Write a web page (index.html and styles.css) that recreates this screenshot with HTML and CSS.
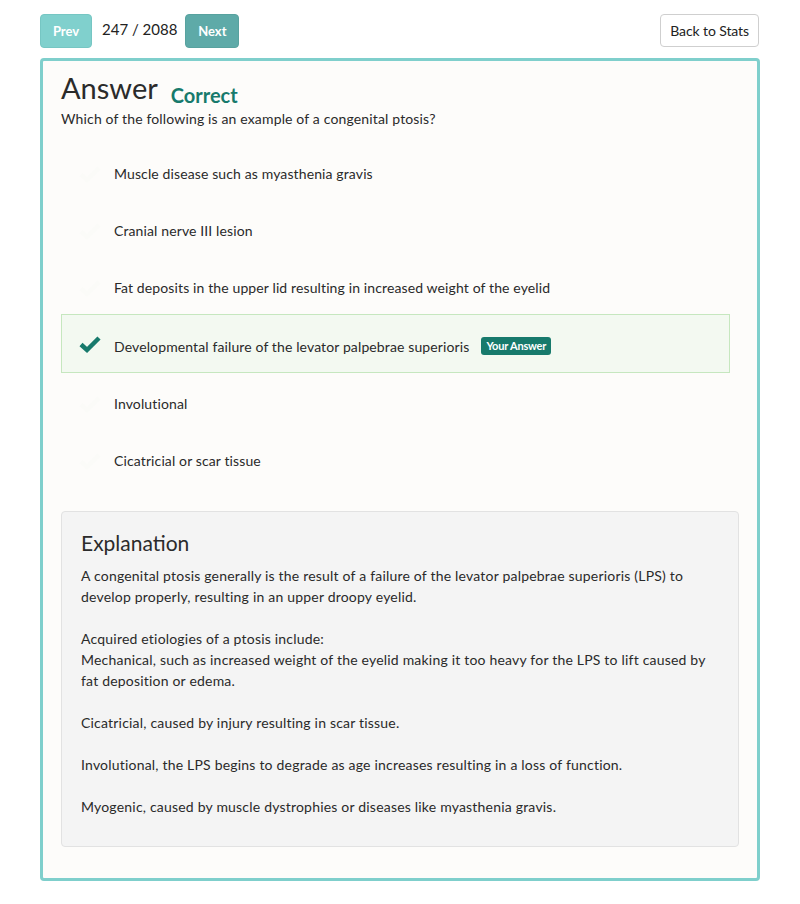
FILE: index.html
```html
<!DOCTYPE html>
<html>
<head>
<meta charset="utf-8">
<link rel="stylesheet" href="styles.css">
</head>
<body>
<div class="page">
  <div class="toolbar">
    <div class="nav">
      <button class="btn btn-prev">Prev</button>
      <span class="counter">247 / 2088</span>
      <button class="btn btn-next">Next</button>
    </div>
    <button class="btn btn-back">Back to Stats</button>
  </div>
  <div class="card">
    <div class="title-row">
      <h1 class="title">Answer</h1>
      <span class="status">Correct</span>
    </div>
    <p class="question">Which of the following is an example of a congenital ptosis?</p>
    <ul class="options">
      <li class="option"><svg class="check" viewBox="0 0 24 24"><path d="M3 12.5 L9 18 L21 6" /></svg><span>Muscle disease such as myasthenia gravis</span></li>
      <li class="option"><svg class="check" viewBox="0 0 24 24"><path d="M3 12.5 L9 18 L21 6" /></svg><span>Cranial nerve III lesion</span></li>
      <li class="option"><svg class="check" viewBox="0 0 24 24"><path d="M3 12.5 L9 18 L21 6" /></svg><span>Fat deposits in the upper lid resulting in increased weight of the eyelid</span></li>
      <li class="option selected"><svg class="check" viewBox="0 0 24 24"><path d="M3 12.5 L9 18 L21 6" /></svg><span>Developmental failure of the levator palpebrae superioris</span><span class="badge">Your Answer</span></li>
      <li class="option"><svg class="check" viewBox="0 0 24 24"><path d="M3 12.5 L9 18 L21 6" /></svg><span>Involutional</span></li>
      <li class="option"><svg class="check" viewBox="0 0 24 24"><path d="M3 12.5 L9 18 L21 6" /></svg><span>Cicatricial or scar tissue</span></li>
    </ul>
    <div class="explanation">
      <h2 class="exp-title">Explanation</h2>
      <p>A congenital ptosis generally is the result of a failure of the levator palpebrae superioris (LPS) to develop properly, resulting in an upper droopy eyelid.</p>
      <p>Acquired etiologies of a ptosis include:<br>Mechanical, such as increased weight of the eyelid making it too heavy for the LPS to lift caused by fat deposition or edema.</p>
      <p>Cicatricial, caused by injury resulting in scar tissue.</p>
      <p>Involutional, the LPS begins to degrade as age increases resulting in a loss of function.</p>
      <p>Myogenic, caused by muscle dystrophies or diseases like myasthenia gravis.</p>
    </div>
  </div>
</div>
</body>
</html>
```

FILE: styles.css
```css
* { box-sizing: border-box; }
body {
  margin: 0;
  background: #ffffff;
  font-family: Lato, "Open Sans", sans-serif;
  color: #2a2a2a;
  font-size: 14px;
}
.page {
  width: 720px;
  margin: 0 auto;
  padding-top: 14px;
}
.toolbar {
  display: flex;
  justify-content: space-between;
  align-items: flex-start;
  height: 34px;
}
.nav {
  display: flex;
  align-items: center;
}
.btn {
  font-family: inherit;
  border-radius: 4px;
  height: 34px;
  cursor: pointer;
  white-space: nowrap;
}
.btn-prev, .btn-next {
  color: #fff;
  font-weight: 700;
  font-size: 13px;
  border: 1px solid transparent;
  width: 52px;
  padding: 0;
}
.btn-prev { background: #80d0cd; border-color: #76c6c3; }
.btn-next { background: #5eaaa8; border-color: #58a29f; width: 54px; }
.counter {
  font-size: 15px;
  color: #222;
  margin: 0 8px 0 10px;
  position: relative;
  top: -2px;
}
.btn-back {
  background: #fff;
  border: 1px solid #cfcfcf;
  color: #222;
  font-size: 14px;
  padding: 0 9px;
  height: 33px;
  margin-right: 1px;
  letter-spacing: -0.1px;
}
.card {
  margin-top: 10px;
  border: 3px solid #7fcfcc;
  border-radius: 4px;
  background: #fdfcfa;
  padding: 10px 18px 31px 18px;
}
.title-row {
  display: flex;
  align-items: baseline;
}
.title {
  font-size: 29px;
  font-weight: 400;
  margin: 0;
  line-height: 34px;
  color: #2b2b2b;
}
.status {
  color: #177a6c;
  font-weight: 700;
  font-size: 20px;
  margin-left: 13px;
  position: relative;
  top: 4px;
}
.question {
  margin: 4px 0 0;
  line-height: 20px;
  letter-spacing: 0.15px;
}
.options {
  list-style: none;
  margin: 16px 9px 0 0;
  padding: 0;
  display: flex;
  flex-direction: column;
}
.option {
  display: flex;
  align-items: center;
  height: 57px;
  padding-left: 16px;
  border: 1px solid transparent;
  letter-spacing: 0.12px;
}
.option.selected {
  background: #f3f9f1;
  border-color: #c6e7bf;
  height: 59px;
  margin-top: -2px;
  margin-bottom: 2px;
  padding-top: 5px;
}
.check {
  width: 24px;
  height: 24px;
  margin-right: 12px;
  fill: none;
  stroke: #fbfbf8;
  stroke-width: 4.5;
  stroke-linecap: butt;
  stroke-linejoin: miter;
}
.selected .check { stroke: #177a6c; margin-top: -5px; }
.option span { color: #2a2a2a; }
.badge {
  background: #177a6c;
  color: #fff !important;
  font-size: 11px;
  font-weight: 700;
  padding: 2px 5px;
  border-radius: 3px;
  margin-left: 12px;
  line-height: 14px;
  letter-spacing: -0.2px;
}
.explanation {
  margin-top: 22px;
  background: #f4f4f4;
  border: 1px solid #e2e2e2;
  border-radius: 4px;
  padding: 16px 19px 29px;
}
.exp-title {
  font-size: 21px;
  font-weight: 400;
  margin: 0 0 7px;
  line-height: 30px;
  color: #2b2b2b;
}
.explanation p {
  margin: 0 0 21px;
  line-height: 21px;
  letter-spacing: 0.2px;
}
.explanation p:last-child { margin-bottom: 0; }
```
